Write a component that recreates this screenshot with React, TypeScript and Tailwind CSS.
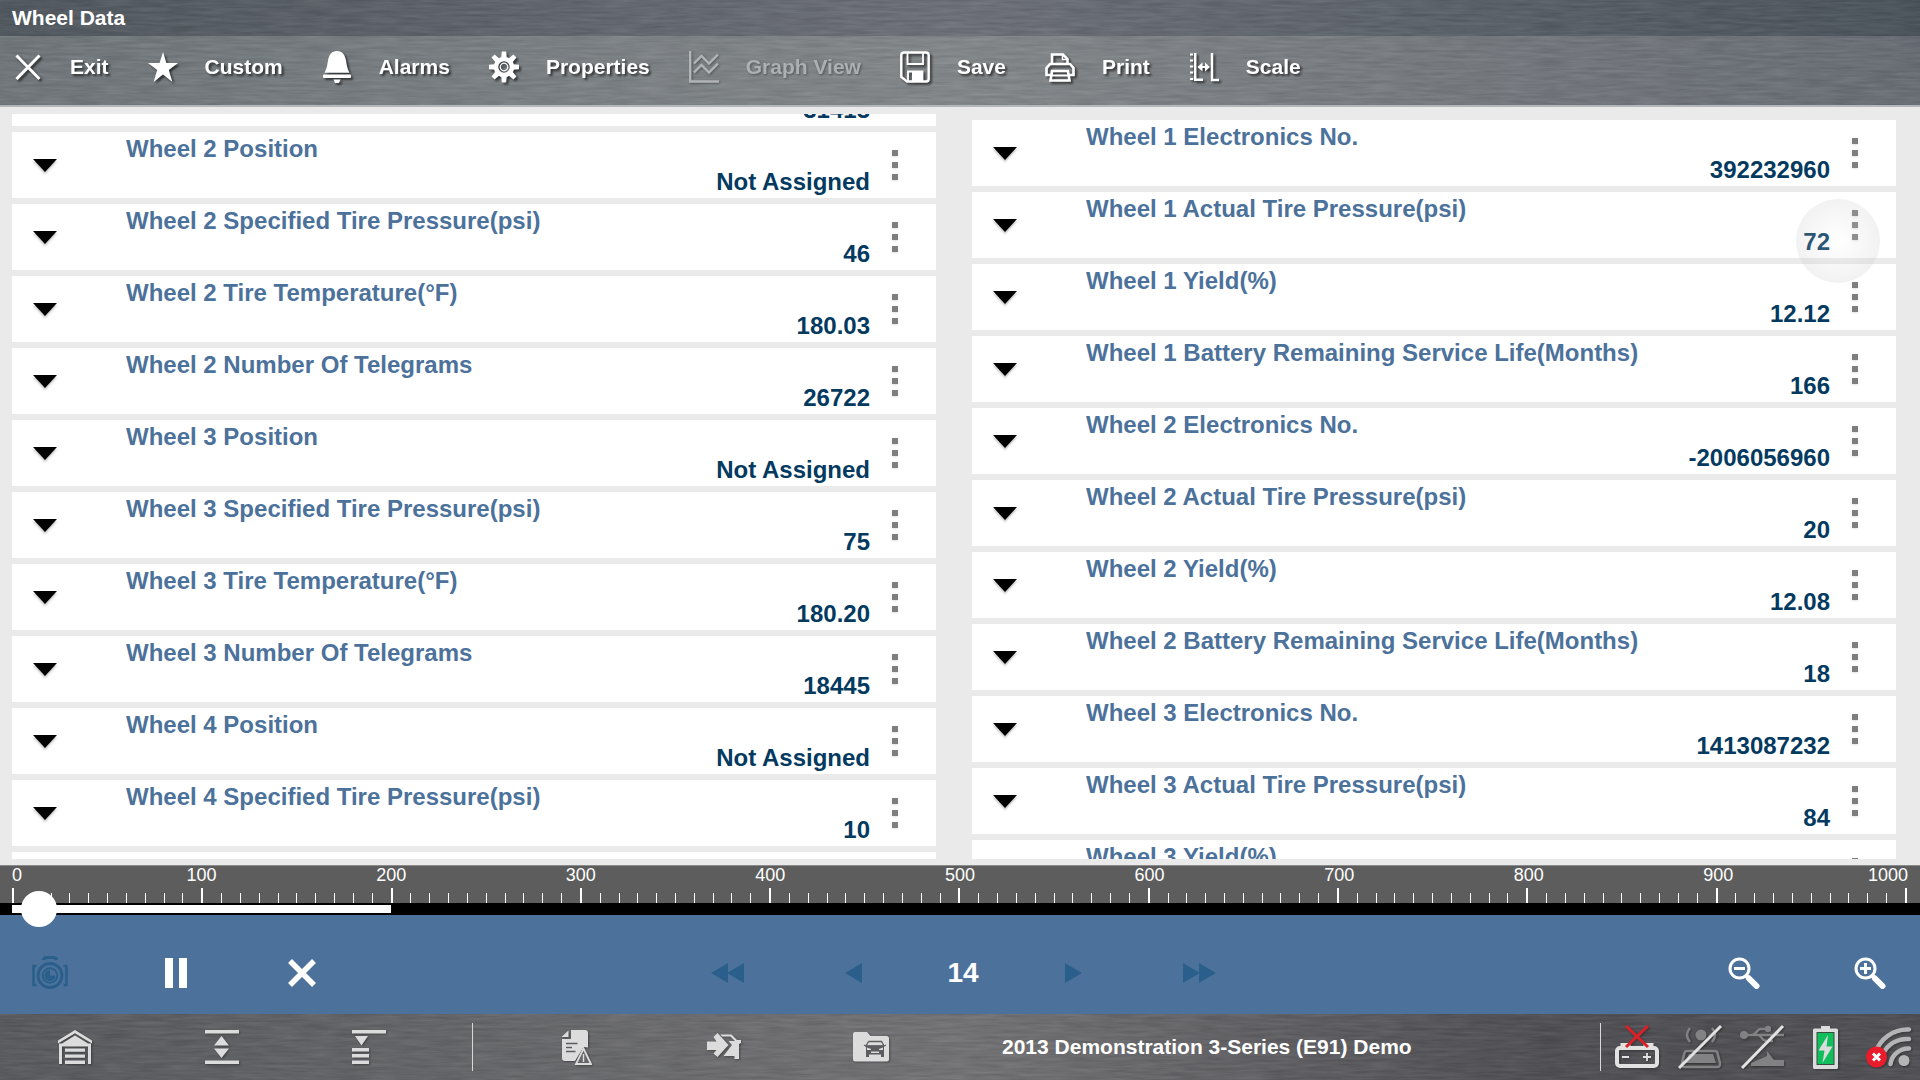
import React, { useState } from 'react';

type Reading = { label: string; value: string };

// First and last entries are scrolled part-way out of view
const leftReadings: Reading[] = [
  { label: '', value: '31413' },
  { label: 'Wheel 2 Position', value: 'Not Assigned' },
  { label: 'Wheel 2 Specified Tire Pressure(psi)', value: '46' },
  { label: 'Wheel 2 Tire Temperature(°F)', value: '180.03' },
  { label: 'Wheel 2 Number Of Telegrams', value: '26722' },
  { label: 'Wheel 3 Position', value: 'Not Assigned' },
  { label: 'Wheel 3 Specified Tire Pressure(psi)', value: '75' },
  { label: 'Wheel 3 Tire Temperature(°F)', value: '180.20' },
  { label: 'Wheel 3 Number Of Telegrams', value: '18445' },
  { label: 'Wheel 4 Position', value: 'Not Assigned' },
  { label: 'Wheel 4 Specified Tire Pressure(psi)', value: '10' },
  { label: '', value: '' },
];

const rightReadings: Reading[] = [
  { label: 'Wheel 1 Electronics No.', value: '392232960' },
  { label: 'Wheel 1 Actual Tire Pressure(psi)', value: '72' },
  { label: 'Wheel 1 Yield(%)', value: '12.12' },
  { label: 'Wheel 1 Battery Remaining Service Life(Months)', value: '166' },
  { label: 'Wheel 2 Electronics No.', value: '-2006056960' },
  { label: 'Wheel 2 Actual Tire Pressure(psi)', value: '20' },
  { label: 'Wheel 2 Yield(%)', value: '12.08' },
  { label: 'Wheel 2 Battery Remaining Service Life(Months)', value: '18' },
  { label: 'Wheel 3 Electronics No.', value: '1413087232' },
  { label: 'Wheel 3 Actual Tire Pressure(psi)', value: '84' },
  { label: 'Wheel 3 Yield(%)', value: '' },
];

// Fine horizontal grain for the metal bars
const Brushed = ({ id }: { id: string }) => (
  <svg className="absolute inset-0 w-full h-full opacity-10 pointer-events-none" aria-hidden="true">
    <filter id={id} x="0" y="0" width="100%" height="100%" colorInterpolationFilters="sRGB">
      <feTurbulence type="fractalNoise" baseFrequency="0.03 0.35" numOctaves="3" seed="4" />
      <feColorMatrix type="matrix" values="1 0 0 0 -0.05  1 0 0 0 -0.05  1 0 0 0 -0.03  0 0 0 0 1" />
    </filter>
    <rect width="100%" height="100%" filter={`url(#${id})`} />
  </svg>
);

/* ---------- toolbar icons ---------- */

const ExitIcon = () => (
  <svg width="30" height="32" viewBox="0 0 30 32" fill="none" stroke="#fff" strokeWidth="3">
    <path d="M3.500 4.500 L26.500 28 M26.500 4.500 L3.500 28" />
  </svg>
);

const StarIcon = () => (
  <svg width="30" height="32" viewBox="0 0 30 32" fill="#fff">
    <path d="M15 1 L18.400 12 H30 L20.800 19 L24.400 31 L15 23.600 L5.600 31 L9.200 19 L0 12 H11.600 Z" />
  </svg>
);

const BellIcon = () => (
  <svg width="30" height="32" viewBox="0 0 30 32" fill="#fff">
    <path d="M15 0 C20.500 0 23 4 24 9.500 C25 15.500 25.500 18 27.500 21.800 H2.500 C4.500 18 5 15.500 6 9.500 C7 4 9.500 0 15 0 Z" />
    <rect x="1" y="23.600" width="28" height="3.400" rx="1" />
    <path d="M11.500 28.600 H18.500 L17 32 H13 Z" />
  </svg>
);

const GearIcon = () => (
  <svg width="30" height="32" viewBox="-15 -16 30 32" fill="#fff">
    {[0, 45, 90, 135, 180, 225, 270, 315].map((deg) => (
      <path key={deg} d="M-2.800 -9 L-2.200 -15.500 H2.200 L2.800 -9 Z" transform={`rotate(${deg})`} />
    ))}
    <circle r="8" fill="none" stroke="#fff" strokeWidth="4.500" />
    <circle r="3.800" fill="none" stroke="#fff" strokeWidth="1.200" />
  </svg>
);

const GraphIcon = () => (
  <svg width="30" height="32" viewBox="0 0 30 32" fill="none" stroke="#b2b5b7" strokeWidth="2.400">
    <path d="M1.200 0 V30.500 H30" />
    <path d="M5 12.500 L12.500 5 L20 12.500 L29 3.500" />
    <path d="M5 21.500 L12.500 14 L20 21.500 L29 12.500" />
  </svg>
);

const SaveIcon = () => (
  <svg width="30" height="32" viewBox="0 0 30 32" fill="none" stroke="#fff" strokeWidth="2.400">
    <path d="M4 1.500 H26 Q28.700 1.500 28.700 4.500 V28 Q28.700 30.500 26 30.500 H7 L1.300 26 V4.500 Q1.300 1.500 4 1.500 Z" />
    <path d="M7.500 2 V13 H23 V2" strokeWidth="1.800" />
    <path d="M8 30 V20.500 H22.500 V30" strokeWidth="1.800" />
    <rect x="12" y="21" width="10" height="9" fill="#fff" stroke="none" />
  </svg>
);

const PrintIcon = () => (
  <svg width="30" height="32" viewBox="0 0 30 32" fill="none" stroke="#fff" strokeWidth="2.600">
    <path d="M7 13 V3.500 H18 L22.500 8 V13" />
    <path d="M17.500 4 V8.500 H22" strokeWidth="1.500" />
    <path d="M6 24 H1.500 V17 L5 13 H25 L28.500 17 V24 H24" />
    <path d="M7 20 H23 L24.500 29.500 H5.500 Z" />
    <path d="M7 24.500 H23" strokeWidth="2" />
  </svg>
);

const ScaleIcon = () => (
  <svg width="30" height="32" viewBox="0 0 30 32" fill="none" stroke="#fff" strokeWidth="2.400">
    <path d="M6.200 2 V28.800 H14" />
    <path d="M1 3.500 H4 M1 9.500 H4 M1 15.500 H4 M1 21.500 H4 M1 28 H4" strokeWidth="2" />
    <path d="M23 2 V29 H30" />
    <path d="M9.500 16 H20" strokeWidth="2" />
    <path d="M13.500 11.500 L8.500 16 L13.500 20.500 Z M16 11.500 L21 16 L16 20.500 Z" fill="#fff" stroke="none" />
  </svg>
);

const toolbarItems = [
  { label: 'Exit', icon: <ExitIcon /> },
  { label: 'Custom', icon: <StarIcon /> },
  { label: 'Alarms', icon: <BellIcon /> },
  { label: 'Properties', icon: <GearIcon /> },
  { label: 'Graph View', icon: <GraphIcon />, disabled: true },
  { label: 'Save', icon: <SaveIcon /> },
  { label: 'Print', icon: <PrintIcon /> },
  { label: 'Scale', icon: <ScaleIcon /> },
];

/* ---------- playback icons ---------- */

const CameraIcon = () => (
  <svg width="38" height="34" viewBox="0 0 38 34" fill="none" stroke="#2a5f8c" strokeWidth="3">
    <path d="M12 4 Q13 1.500 16 1.500 H22 Q25 1.500 26 4" />
    <path d="M5.500 10 H2.500 V29 H5.500 M32.500 10 H35.500 V29 H32.500" strokeWidth="2.600" />
    <circle cx="19" cy="19.500" r="12" strokeWidth="3" />
    <circle cx="19" cy="19.500" r="7.300" strokeWidth="2" />
    <path d="M19 19.500 V14 A5.500 5.500 0 1 0 24.500 19.500 Z" fill="#2a5f8c" stroke="none" />
  </svg>
);

const PauseIcon = () => (
  <svg width="22" height="30" viewBox="0 0 22 30" fill="#fff">
    <rect width="8" height="30" />
    <rect x="14" width="8" height="30" />
  </svg>
);

const StopIcon = () => (
  <svg width="28" height="28" viewBox="0 0 28 28" fill="none" stroke="#fff" strokeWidth="5.500">
    <path d="M2 2 L26 26 M26 2 L2 26" />
  </svg>
);

const ArrowIcon = ({ double, flip }: { double?: boolean; flip?: boolean }) => (
  <svg width={double ? 33 : 17} height="20" viewBox={double ? '0 0 33 20' : '0 0 17 20'} fill="#2a5f8c">
    <g transform={flip ? `translate(${double ? 33 : 17} 0) scale(-1 1)` : undefined}>
      <path d="M17 0 V20 L0 10 Z" />
      {double && <path d="M33 0 V20 L16 10 Z" />}
    </g>
  </svg>
);

const ZoomIcon = ({ plus }: { plus?: boolean }) => (
  <svg width="32" height="32" viewBox="0 0 32 32" fill="none" stroke="#fff">
    <circle cx="11.500" cy="11.500" r="9.500" strokeWidth="3" />
    <path d="M6 11.500 H17" strokeWidth="3" />
    {plus && <path d="M11.500 6 V17" strokeWidth="3" />}
    <path d="M18 18.500 L21 21.500" strokeWidth="4" />
    <path d="M21 21.500 L28.500 29" strokeWidth="6" strokeLinecap="round" />
  </svg>
);

/* ---------- footer icons ---------- */

const GarageIcon = () => (
  <svg width="34" height="34" viewBox="0 0 34 34" fill="#dcdcdc">
    <path d="M17 0 L34 10.500 V13.500 L17 3.200 L0 13.500 V10.500 Z" />
    <path d="M17 5.500 L30 13.500 H33 V34 H30 V16.500 H4 V34 H1 V13.500 H4 Z" />
    <path d="M7 18.500 H27 V21.800 H7 Z M7 24.500 H27 V27.800 H7 Z M7 30.500 H27 V34 H7 Z" />
  </svg>
);

const ExpandIcon = () => (
  <svg width="34" height="34" viewBox="0 0 34 34" fill="#dcdcdc">
    <path d="M0 0 H34 V3.500 H0 Z M0 30.500 H34 V34 H0 Z" />
    <path d="M16.500 6 L24 15.500 H9 Z M16.500 28 L24 18.500 H9 Z" />
  </svg>
);

const CollapseIcon = () => (
  <svg width="34" height="34" viewBox="0 0 34 34" fill="#dcdcdc">
    <path d="M0 0 H34 V3.500 H0 Z M3 6 H16 L9.500 15.500 Z" />
    <path d="M0 18 H17 V21.500 H0 Z M0 24 H17 V27.500 H0 Z M0 30.500 H17 V34 H0 Z" />
  </svg>
);

const ReportIcon = () => (
  <svg width="31" height="35" viewBox="0 0 31 35" fill="#dcdcdc">
    <path d="M10 0 H24 Q27 0 27 3 V17.500 L22.500 17 L14 31 H4 Q1 31 1 28 V9 H10 Z" />
    <path d="M7.500 0.500 V7 H0.500 Z" />
    <path d="M5 13.500 H16.500 M5 17.500 H11 M5 21.500 H14.500" stroke="#5c5c60" strokeWidth="1.300" />
    <path d="M22.500 18.500 L30 34 H15 Z" fill="#66666a" stroke="#dcdcdc" strokeWidth="1.800" />
    <path d="M22.500 24 V32" stroke="#dcdcdc" strokeWidth="1.500" />
  </svg>
);

const VehicleInIcon = () => (
  <svg width="34" height="28" viewBox="0 0 34 28" fill="#dcdcdc">
    <path d="M0 8.500 H9.500 L6.500 4 L10.500 0 L21.500 12 L10.500 24 L6.500 20.500 L9.500 17 H0 Z" />
    <path d="M13.500 1.500 H24.500 L30 7 H34 V10 L32 11 V26 H27.500 V23 H16.500 L25 12 L21.500 8 H28 L23.500 3.500 H15 Z" />
  </svg>
);

const FolderIcon = () => (
  <svg width="36" height="30" viewBox="0 0 36 30">
    <path d="M2 0 H14 L17.500 4 H33.500 Q36 4 36 6.500 V27 Q36 29.500 33.500 29.500 H2.500 Q0 29.500 0 27 V2 Q0 0 2 0 Z" fill="#dcdcdc" />
    <path d="M15.500 9.500 H28.500 L31 14 L33 13 M31 14 H13 L15.500 9.500 M13 14 L11 13" fill="none" stroke="#5c5c60" strokeWidth="1.300" />
    <path d="M13 13.500 H31 V25 H28 V22.500 H16 V25 H13 Z" fill="#5c5c60" />
    <path d="M14 15.500 L18 17 V18 H14 Z M30 15.500 L26 17 V18 H30 Z M18 19.500 H26 V21 H18 Z" fill="#dcdcdc" />
  </svg>
);

const BatteryLinkIcon = () => (
  <svg width="44" height="44" viewBox="0 0 44 44" fill="none">
    <path d="M7 22 V19.500 H14 V22 M30 22 V19.500 H37 V22" stroke="#e2e2e2" strokeWidth="3" />
    <rect x="2" y="23" width="40" height="18" rx="3" stroke="#e2e2e2" strokeWidth="4" />
    <path d="M7 32 H14 M28 32 H36 M32 28 V36" stroke="#e2e2e2" strokeWidth="1.800" />
    <path d="M11 1 L33 22 M33 1 L11 22" stroke="#dc2027" strokeWidth="3" />
  </svg>
);

const ScanModuleIcon = () => (
  <svg width="46" height="46" viewBox="0 0 46 46" fill="none" stroke="#828285" strokeWidth="2.500">
    <circle cx="24" cy="11" r="5.500" fill="#828285" stroke="none" />
    <path d="M13 4 Q7 11 13 18 M35 4 Q41 11 35 18" />
    <path d="M10 27 H38 Q40 27 40.500 29 L43 39 Q43.500 43 40 43 H8 Q4.500 43 5 39 L7.500 29 Q8 27 10 27 Z" />
    <path d="M12 30 H36 L39 39 H9 Z" fill="#828285" stroke="none" />
    <path d="M2 44 L44 2" stroke="#e2e2e2" strokeWidth="3" />
  </svg>
);

const UsbIcon = () => (
  <svg width="46" height="46" viewBox="0 0 46 46" fill="none" stroke="#828285" strokeWidth="2.400">
    <circle cx="4" cy="11" r="4" fill="#828285" stroke="none" />
    <path d="M4 11 H44 M12 11 C17 11 16 5 21 5 H26 M18 11 C22 11 21 17 27 17 H33" />
    <circle cx="28" cy="5" r="3.200" fill="#828285" stroke="none" />
    <path d="M11 39 L27 32 V27 L34 36 H44 V42 H11 Z" fill="#828285" stroke="none" />
    <path d="M2 44 L43 2" stroke="#e2e2e2" strokeWidth="3" />
  </svg>
);

const BatteryIcon = () => (
  <svg width="25" height="43" viewBox="0 0 25 43">
    <path d="M8 0 H17 V2.500 H23.500 Q25 2.500 25 4 V41.500 Q25 43 23.500 43 H1.500 Q0 43 0 41.500 V4 Q0 2.500 1.500 2.500 H8 Z" fill="#dcdcdc" />
    <rect x="4" y="6.500" width="17" height="32" fill="#10bf5c" stroke="#3d4a42" />
    <path d="M15 9 L5.500 24.500 H11.500 L9.500 37 L19.500 20.500 H13.500 Z" fill="#dcdcdc" />
  </svg>
);

const WifiIcon = () => (
  <svg width="46" height="42" viewBox="0 0 46 42" fill="none" stroke="#b4b4b6" strokeWidth="4.500" strokeLinecap="round">
    <path d="M9 28 A34 34 0 0 1 43 3.500 M17 28 A26 26 0 0 1 43 13 M24.500 38 A18 18 0 0 1 43 22.500" />
    <circle cx="38" cy="34.500" r="5.500" fill="#b4b4b6" stroke="none" />
    <circle cx="10.500" cy="31" r="10.500" fill="#ea1c2c" stroke="none" />
    <path d="M7 27.500 L14 34.500 M14 27.500 L7 34.500" stroke="#fff" strokeWidth="3" strokeLinecap="butt" />
  </svg>
);

/* ---------- data rows ---------- */

const ReadingRow = ({ label, value, pressed }: Reading & { pressed?: boolean }) => (
  <li className="relative flex h-[66px] shrink-0 bg-white pl-[21px] pr-[38px] text-2xl leading-[33px] font-bold">
    <button type="button" aria-label={`Expand ${label}`} className="w-6 flex items-center justify-center">
      <svg width="24" height="13" viewBox="0 0 24 13" className="drop-shadow-[0_2px_1px_rgba(0,0,0,0.25)]">
        <path d="M0 0 H24 L12 13 Z" />
      </svg>
    </button>
    <div className="flex-1 ml-[69px] mr-[22px]">
      <p className="min-h-[33px] text-[#4c729b]">{label}</p>
      <p className="text-right text-[#043a5f]">{value}</p>
    </div>
    <button type="button" aria-label={`Options for ${label}`} className="flex flex-col gap-1.5 pt-[18px]">
      <span className="size-1.5 bg-[#7e7e7e] shadow-sm"></span>
      <span className="size-1.5 bg-[#7e7e7e] shadow-sm"></span>
      <span className="size-1.5 bg-[#7e7e7e] shadow-sm"></span>
    </button>
    {pressed && (
      <span className="absolute z-10 right-4 top-[7px] size-[84px] rounded-full pointer-events-none bg-[radial-gradient(circle,rgba(255,255,255,0.15)_0%,rgba(200,200,200,0.2)_60%,rgba(180,180,180,0.25)_100%)]"></span>
    )}
  </li>
);

const Ruler = () => (
  <div className="h-[38px] px-3 bg-[#5d5d5d] border-t border-[#8a8a8a] text-white text-lg leading-[19px] flex flex-col justify-between">
    <div className="flex">
      <span className="w-[5%]">0</span>
      {[100, 200, 300, 400, 500, 600, 700, 800, 900].map((n) => (
        <span key={n} className="w-[10%] text-center">{n}</span>
      ))}
      <span className="w-[5%] text-right">1000</span>
    </div>
    <div className="flex justify-between items-end">
      {Array.from({ length: 101 }, (_, i) => (
        <span key={i} className={i % 10 === 0 ? 'w-0.5 h-[15px] bg-white' : 'w-px h-2.5 bg-white'}></span>
      ))}
    </div>
  </div>
);

const playButton = 'w-[100px] h-16 flex items-center justify-center';
const footerButton = 'w-[147px] h-full flex items-center justify-center drop-shadow-[1px_1px_1px_rgba(0,0,0,0.35)]';

const App = () => {
  const [frame, setFrame] = useState(14);

  return (
    <div className="h-screen flex flex-col overflow-hidden bg-[#eaeaea] font-['Liberation_Sans',Arial,sans-serif]">
      <header className="shrink-0 text-white text-[21px] font-bold">
        <div className="relative h-9 px-3 flex items-center bg-linear-to-r from-[#4f565d] via-[#6c7079] to-[#49525a]">
          <Brushed id="grain-title" />
          <h1 className="relative">Wheel Data</h1>
        </div>
        <nav className="relative h-[71px] pl-[13px] pb-2 flex items-center gap-[39px] border-b-2 border-[#b4b6b8] bg-linear-to-r from-[#70777b] via-[#84898b] to-[#686d75]">
          <Brushed id="grain-toolbar" />
          {toolbarItems.map((item) => (
            <button
              key={item.label}
              type="button"
              disabled={item.disabled}
              className={
                item.disabled
                  ? 'relative flex items-center gap-[27px] text-[#adb0b2] drop-shadow-[1px_1px_1px_rgba(0,0,0,0.35)]'
                  : 'relative flex items-center gap-[27px] drop-shadow-[2px_2px_1px_rgba(0,0,0,0.6)]'
              }
            >
              {item.icon}
              {item.label}
            </button>
          ))}
        </nav>
      </header>

      <main className="flex-1 min-h-0 flex gap-9 pt-[7px] pb-1.5 pl-3 pr-6">
        <ul className="flex-1 flex flex-col gap-1.5 overflow-hidden [&>li:first-child]:-mt-[54px]">
          {leftReadings.map((r, i) => (
            <ReadingRow key={i} {...r} />
          ))}
        </ul>
        <ul className="flex-1 flex flex-col gap-1.5 overflow-hidden pt-1.5">
          {rightReadings.map((r, i) => (
            <ReadingRow key={i} {...r} pressed={i === 1} />
          ))}
        </ul>
      </main>

      <section className="shrink-0 bg-[#4c729b]">
        <Ruler />
        <div className="relative h-3 px-3 py-0.5 bg-black">
          <div className="h-full w-1/5 bg-white"></div>
          <input
            type="range"
            aria-label="Frame"
            min={0}
            max={1000}
            value={frame}
            onChange={(e) => setFrame(Number(e.target.value))}
            className="absolute -top-3 -left-1.5 w-[calc(100%+12px)] h-9 appearance-none bg-transparent [&::-webkit-slider-thumb]:appearance-none [&::-webkit-slider-thumb]:size-9 [&::-webkit-slider-thumb]:rounded-full [&::-webkit-slider-thumb]:bg-white"
          />
        </div>

        <div className="h-[99px] pt-[17px] grid grid-cols-[1fr_auto_1fr] items-center">
          <div className="flex gap-[26px]">
            <button type="button" aria-label="Snapshot" className={playButton}><CameraIcon /></button>
            <button type="button" aria-label="Pause" className={playButton}><PauseIcon /></button>
            <button type="button" aria-label="Stop" className={playButton}><StopIcon /></button>
          </div>
          <div className="flex items-center pl-1.5">
            <button type="button" aria-label="Fast rewind" className={playButton}><ArrowIcon double /></button>
            <button type="button" aria-label="Previous frame" className={`${playButton} ml-[26px]`}><ArrowIcon /></button>
            <output className="w-[120px] text-center text-white text-[28px] font-bold">{frame}</output>
            <button type="button" aria-label="Next frame" className={playButton}><ArrowIcon flip /></button>
            <button type="button" aria-label="Fast forward" className={`${playButton} ml-[26px]`}><ArrowIcon double flip /></button>
          </div>
          <div className="flex gap-[26px] justify-end">
            <button type="button" aria-label="Zoom out" className={playButton}><ZoomIcon /></button>
            <button type="button" aria-label="Zoom in" className={playButton}><ZoomIcon plus /></button>
          </div>
        </div>
      </section>

      <footer className="relative shrink-0 h-[66px] bg-linear-to-r from-[#58595c] via-[#737376] via-50% to-[#4e4e52] to-80%">
        <Brushed id="grain-footer" />
        <div className="relative h-full flex items-center pl-px">
          <button type="button" aria-label="Home" className={footerButton}><GarageIcon /></button>
          <button type="button" aria-label="Expand all" className={footerButton}><ExpandIcon /></button>
          <button type="button" aria-label="Collapse all" className={footerButton}><CollapseIcon /></button>
          <div className="w-px h-12 mx-[30px] bg-[#d8d8d8]"></div>
          <button type="button" aria-label="Trouble report" className={footerButton}><ReportIcon /></button>
          <button type="button" aria-label="Connect vehicle" className={footerButton}><VehicleInIcon /></button>
          <button type="button" aria-label="Vehicle records" className={footerButton}><FolderIcon /></button>
          <p className="flex-1 pl-[58px] text-white text-[21px] font-bold">2013 Demonstration 3-Series (E91) Demo</p>
          <div className="w-px h-12 mr-1 bg-[#d8d8d8]"></div>
          <div className="grid grid-cols-[repeat(5,63px)] items-center justify-items-center drop-shadow-[1px_1px_1px_rgba(0,0,0,0.35)]">
            <BatteryLinkIcon />
            <ScanModuleIcon />
            <UsbIcon />
            <BatteryIcon />
            <WifiIcon />
          </div>
        </div>
      </footer>
    </div>
  );
};

export default App;
